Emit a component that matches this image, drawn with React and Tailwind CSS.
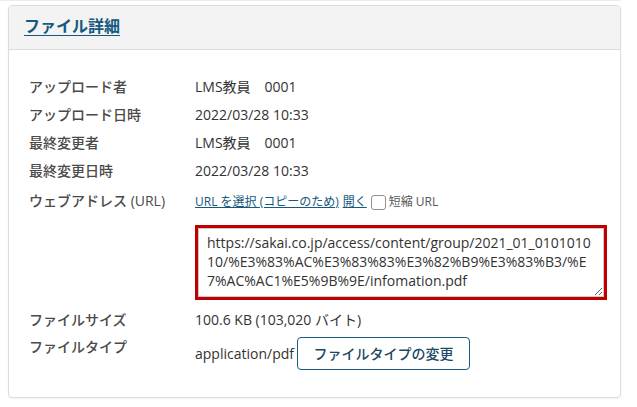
import React from 'react';

const font = { fontFamily: '"Open Sans", "Noto Sans CJK JP", sans-serif' };

const rows = [
  ['アップロード者', 'LMS教員　0001'],
  ['アップロード日時', '2022/03/28 10:33'],
  ['最終変更者', 'LMS教員　0001'],
  ['最終変更日時', '2022/03/28 10:33'],
];

const url =
  'https://sakai.co.jp/access/content/group/2021_01_010101010/%E3%83%AC%E3%83%83%E3%82%B9%E3%83%B3/%E7%AC%AC1%E5%9B%9E/infomation.pdf';

function Label({ children, className = '' }) {
  return (
    <div className={`w-[166px] shrink-0 font-medium text-[#4a4a4a] ${className}`}>
      {children}
    </div>
  );
}

export default function App() {
  return (
    <div className="w-[637px] h-[407px] bg-white text-[14px] overflow-hidden" style={font}>
      <div className="h-px w-[621px] bg-[#ececec]" />

      <div className="ml-[8px] mt-[4px] w-[613px] h-[393px] border border-[#dcdcdc] rounded-[4px] shadow-[0_1px_2px_rgba(0,0,0,0.06)] flex flex-col">
        {/* header */}
        <div className="h-[44px] bg-[#f3f3f3] border-b border-[#dcdcdc] rounded-t-[4px] flex items-center pl-[15px] pb-[3px]">
          <h2 className="text-[16px] font-bold text-[#15597e] underline underline-offset-[3px] leading-[20px]">
            ファイル詳細
          </h2>
        </div>

        {/* body */}
        <div className="pl-[20px] pt-[23px] flex flex-col">
          {rows.map(([k, v]) => (
            <div key={k} className="flex leading-[28px]">
              <Label>{k}</Label>
              <div className="text-[#333]">{v}</div>
            </div>
          ))}

          <div className="flex leading-[28px] mt-[2px]">
            <Label>ウェブアドレス (URL)</Label>
            <div className="flex items-center text-[12px] pt-[1px]">
              <a href="#" className="text-[#15597e] underline">URL を選択 (コピーのため)</a>
              <a href="#" className="ml-[4px] text-[#15597e] underline">開く</a>
              <span className="ml-[4px] w-[15px] h-[15px] border border-[#8f8f8f] rounded-[3px] bg-white" />
              <span className="ml-[3px] text-[#555]">短縮 URL</span>
            </div>
          </div>

          <div className="flex mt-[9px]">
            <div className="w-[166px] shrink-0" />
            <div className="border-[3px] border-[#c00000] w-[412px] h-[75px]">
              <textarea
                readOnly
                value={url}
                className="block w-full h-full border border-[#c8c8c8] bg-white px-[8px] pt-[4px] text-[14px] leading-[19px] text-[#333] break-all outline-none resize"
                style={font}
              />
            </div>
          </div>

          <div className="flex leading-[28px] mt-[6px]">
            <Label>ファイルサイズ</Label>
            <div className="text-[#333]">100.6 KB (103,020 バイト)</div>
          </div>

          <div className="flex mt-[3px]">
            <Label className="leading-[20px]">ファイルタイプ</Label>
            <div className="flex items-center">
              <span className="text-[#333]">application/pdf</span>
              <button className="ml-[3px] w-[173px] h-[33px] border border-[#1d5a80] rounded-[4px] bg-white text-[#1c4966] font-medium text-[14px]">
                ファイルタイプの変更
              </button>
            </div>
          </div>
        </div>
      </div>
    </div>
  );
}
